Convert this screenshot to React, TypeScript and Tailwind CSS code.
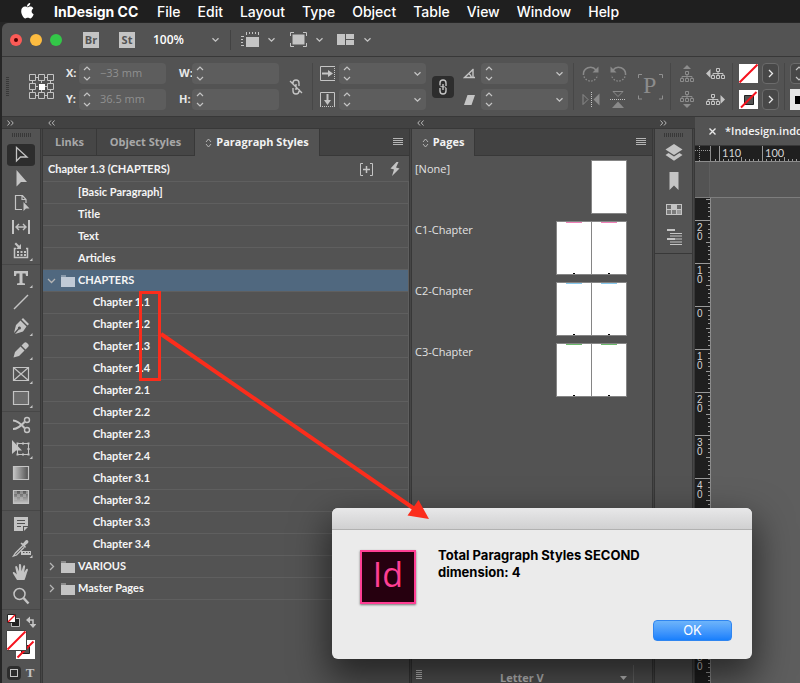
import type { ReactNode } from "react";

const ui = "font-['Open_Sans','Noto_Sans',sans-serif]";
const mac = "font-['Inter','Liberation_Sans',sans-serif]";
const list = "font-['Lato','Open_Sans',sans-serif]";

function Icon({ w = 26, h = 24, label, children }: { w?: number; h?: number; label?: string; children: ReactNode }) {
  return (
    <svg width={w} height={h} viewBox={`0 0 ${w} ${h}`} fill="none" className="shrink-0" aria-label={label} aria-hidden={label ? undefined : true}>
      {children}
    </svg>
  );
}

const C = "#c4c4c4";

/* ---------- Mac menu bar ---------- */

const menus = ["File", "Edit", "Layout", "Type", "Object", "Table", "View", "Window", "Help"];

function MenuBar() {
  return (
    <nav className={`${mac} flex h-[22px] shrink-0 items-center overflow-hidden bg-[#1f1f1f] pl-5 text-[14px] font-medium text-white`}>
      <Icon w={15} h={18}>
        <path
          fill="#fff"
          d="M10.2 1c.1 1-.3 1.900-.9 2.600-.6.700-1.500 1.200-2.400 1.100-.1-.9.300-1.900.9-2.500C8.400 1.500 9.400 1 10.200 1zM13.300 6.400c-.1.100-1.700 1-1.700 2.900 0 2.200 2 3 2 3 0 .1-.3 1.100-1 2.200-.7.900-1.300 1.900-2.300 1.900s-1.300-.6-2.500-.6-1.600.6-2.500.6-1.600-.9-2.400-2C2 13.100 1.200 11.100 1.200 9.200c0-3 1.900-4.600 3.800-4.600 1 0 1.900.7 2.500.7S9.200 4.500 10.400 4.500c.4 0 2 .1 2.900 1.900z"
        />
      </Icon>
      <button className="ml-[19px] w-[103px] text-left font-bold">InDesign CC</button>
      <div className="flex gap-[17px]">
        {menus.map((m) => (
          <button key={m}>{m}</button>
        ))}
      </div>
    </nav>
  );
}

/* ---------- Application bar ---------- */

function Chevron({ color = C }: { color?: string }) {
  return (
    <Icon w={9} h={6}>
      <path d="M1.500 1.200 4.500 4.200 7.500 1.200" stroke={color} strokeWidth="1.300" />
    </Icon>
  );
}

function AppBar() {
  return (
    <header className="flex h-[34px] shrink-0 items-center overflow-hidden rounded-tl-md border-b border-[#383838] bg-[#535353] pl-2">
      <div className="flex gap-2">
        <button aria-label="Close" className="flex size-3 items-center justify-center rounded-full bg-[#fc5b57]">
          <span className="size-1 rounded-full bg-[#4d0000]" />
        </button>
        <button aria-label="Minimize" className="size-3 rounded-full bg-[#fdbc40]" />
        <button aria-label="Zoom" className="size-3 rounded-full bg-[#33c748]" />
      </div>
      <button className={`${ui} ml-[21px] size-4 bg-[#c4c4c4] text-[11px] leading-4 font-bold text-[#535353]`}>Br</button>
      <button className={`${ui} ml-5 size-4 bg-[#c4c4c4] text-[11px] leading-4 font-bold text-[#535353]`}>St</button>
      <select aria-label="Zoom level" defaultValue="100%" className={`${ui} ml-[18px] w-[58px] appearance-none bg-transparent text-[12px] font-semibold text-white`}>
        <option>100%</option>
      </select>
      <Chevron />
      <span className="mx-[10px] h-5 w-px bg-[#424242]" />
      <button aria-label="View options" className="flex items-center gap-2">
        <Icon w={18} h={15}>
          <path d="M5 5h13v10H5z" fill={C} />
          <path d="M5.500 0v3M8.500 0v2M11.500 0v2M14.500 0v2M17.500 0v3M0 4.500h3M0 7.500h2M0 10.500h2M0 13.500h3" stroke={C} />
        </Icon>
        <Chevron />
      </button>
      <button aria-label="Screen mode" className="ml-[14px] flex items-center gap-2">
        <Icon w={17} h={15}>
          <path d="M2.500 2.500h12v10h-12z" fill={C} />
          <path d="M.5 4V.5H4M13 .5h3.500V4M.5 11v3.500H4M13 14.500h3.500V11" stroke={C} />
        </Icon>
        <Chevron />
      </button>
      <button aria-label="Arrange documents" className="ml-[13px] flex items-center gap-2">
        <Icon w={18} h={12}>
          <path d="M0 0h8v11H0zM9 0h8v5H9zM9 6h8v5H9z" fill={C} />
        </Icon>
        <Chevron />
      </button>
    </header>
  );
}

/* ---------- Control panel ---------- */

function Stepper() {
  return (
    <Icon w={8} h={17}>
      <path d="M1 5 4 2 7 5M1 12 4 15 7 12" stroke={C} strokeWidth="1.200" />
    </Icon>
  );
}

function Field({ label, name, value = "", menu = false }: { label?: string; name: string; value?: string; menu?: boolean }) {
  return (
    <label className="flex h-[21px] items-center">
      {label && <span className={`${ui} w-[13px] shrink-0 text-[11px] font-bold text-[#e8e8e8]`}>{label}</span>}
      <span className="flex h-full w-[87px] items-center rounded-sm bg-[#5d5d5d] pr-1 pl-1">
        <Stepper />
        <input aria-label={name} defaultValue={value} className={`${ui} ml-[9px] w-full min-w-0 bg-transparent text-[11px] text-[#909090] outline-none`} />
        {menu && <Chevron />}
      </span>
    </label>
  );
}

function Pair({ children, className = "" }: { children: ReactNode; className?: string }) {
  return <div className={`flex shrink-0 flex-col gap-[5px] ${className}`}>{children}</div>;
}

function Cell({ label, children }: { label: string; children: ReactNode }) {
  return (
    <button aria-label={label} className="flex h-[21px] items-center justify-center">
      {children}
    </button>
  );
}

function Rule({ className }: { className: string }) {
  return <span className={`h-[47px] w-px shrink-0 bg-[#474747] ${className}`} />;
}

function ArrowButton({ label }: { label: string }) {
  return (
    <button aria-label={label} className="flex h-[21px] w-[17px] items-center justify-center rounded-sm border border-[#6b6b6b] bg-[#484848]">
      <Icon w={6} h={9}>
        <path d="M1 1 4.500 4.500 1 8" stroke="#e8e8e8" strokeWidth="1.300" />
      </Icon>
    </button>
  );
}

function Tree() {
  return <path d="M5.500.5h3v3h-3zM.5 7.500h3v3h-3zM5.500 7.500h3v3h-3zM10.500 7.500h3v3h-3zM7 3.500v4M2 7.500v-2h10v2" stroke="currentColor" />;
}

function ControlPanel() {
  return (
    <section aria-label="Control" className="flex h-[60px] shrink-0 items-center overflow-hidden border-b border-[#383838] bg-[#535353] pl-1">
      <Icon w={3} h={20}>
        <path d="M1.500 0v20" stroke="#383838" strokeWidth="3" strokeDasharray="1 1" />
      </Icon>
      <button aria-label="Reference point" className="ml-5">
        <Icon w={26} h={26}>
          <path d="M.5.5h6v6h-6zM9.500.5h6v6h-6zM18.500.5h6v6h-6zM.5 9.500h6v6h-6zM18.500 9.500h6v6h-6zM.5 18.500h6v6h-6zM9.500 18.500h6v6h-6zM18.500 18.500h6v6h-6zM7 3.500h2M16 3.500h2M7 21.500h2M16 21.500h2M3.500 7v2M3.500 16v2M21.500 7v2M21.500 16v2M12.500 7v2M12.500 16v2M7 12.500h2M16 12.500h2" stroke={C} />
          <path d="M10 10h6v6h-6z" fill="#fff" />
        </Icon>
      </button>
      <Pair className="ml-[11px]">
        <Field label="X:" name="X position" value="−33 mm" />
        <Field label="Y:" name="Y position" value="36.5 mm" />
      </Pair>
      <Pair className="ml-[13px]">
        <Field label="W:" name="Width" />
        <Field label="H:" name="Height" />
      </Pair>
      <button aria-label="Constrain proportions" className="ml-[10px]">
        <Icon w={14} h={16}>
          <path d="M4 6V4a3 3 0 0 1 6 0v3M4 9v3a3 3 0 0 0 6 0v-2M7 5v6M1 2l12 12" stroke={C} strokeWidth="1.400" />
        </Icon>
      </button>
      <Rule className="ml-[9px]" />
      <Pair className="ml-[7px]">
        <Cell label="Scale X">
          <Icon w={15} h={15}>
            <path d="M14 .5H.5v14H14" stroke={C} />
            <path d="M14.500 0v15" stroke={C} strokeDasharray="1 1" />
            <path d="M2 6.500h6V4l5 3.500L8 11V8.500H2z" fill={C} />
          </Icon>
        </Cell>
        <Cell label="Scale Y">
          <Icon w={15} h={15}>
            <path d="M.5 14V.5h14V14" stroke={C} />
            <path d="M0 14.500h15" stroke={C} strokeDasharray="1 1" />
            <path d="M6.500 2v6H4l3.500 5L11 8H8.500V2z" fill={C} />
          </Icon>
        </Cell>
      </Pair>
      <Pair className="ml-1">
        <Field name="Scale X percentage" menu />
        <Field name="Scale Y percentage" menu />
      </Pair>
      <button aria-label="Link scale" className="ml-[6px] flex size-[22px] shrink-0 items-center justify-center rounded-sm bg-[#2d2d2d]">
        <Icon w={10} h={16}>
          <path d="M2 6V4a3 3 0 0 1 6 0v3M2 9v3a3 3 0 0 0 6 0V9M5 5v6" stroke={C} strokeWidth="1.400" />
          <path d="M2 6.500a2 1.500 0 0 0 3 1M8 9a2 1.500 0 0 0-3-1" stroke={C} />
        </Icon>
      </button>
      <Pair className="ml-[9px]">
        <Cell label="Rotation">
          <Icon w={13} h={11}>
            <path d="M10.500 1 1.500 9.500H12M5.500 5.500a6 6 0 0 1 3 4M10 1v8" stroke={C} strokeWidth="1.400" />
          </Icon>
        </Cell>
        <Cell label="Shear">
          <Icon w={13} h={10}>
            <path d="M4.500 0H12L8.500 10H1z" fill={C} />
          </Icon>
        </Cell>
      </Pair>
      <Pair className="ml-[5px]">
        <Field name="Rotation angle" menu />
        <Field name="Shear angle" menu />
      </Pair>
      <Rule className="ml-[5px]" />
      <Pair className="ml-2">
        <Cell label="Rotate clockwise">
          <Icon w={18} h={18}>
            <path d="M1.500 10a7 7 0 0 1 12.500-5" stroke="#8a8a8a" strokeWidth="1.500" />
            <path d="M16.500 1.500v6h-6z" fill="#8a8a8a" />
            <path d="M2 11.500a7 7 0 0 0 13.500-1.500" stroke="#8a8a8a" strokeWidth="1.300" strokeDasharray="1.500 1.500" />
          </Icon>
        </Cell>
        <Cell label="Flip horizontal">
          <Icon w={18} h={15}>
            <path d="M1 2.500 6 7.500 1 12.500z" stroke="#8a8a8a" />
            <path d="M9.500 0v15" stroke={C} strokeDasharray="1 1" />
            <path d="M17.500 1.500v12l-6-6z" fill="#8a8a8a" />
          </Icon>
        </Cell>
      </Pair>
      <Pair className="ml-[9px]">
        <Cell label="Rotate counterclockwise">
          <Icon w={18} h={18}>
            <path d="M16.500 10A7 7 0 0 0 4 5" stroke="#8a8a8a" strokeWidth="1.500" />
            <path d="M1.500 1.500v6h6z" fill="#8a8a8a" />
            <path d="M16 11.500A7 7 0 0 1 2.500 10" stroke="#8a8a8a" strokeWidth="1.300" strokeDasharray="1.500 1.500" />
          </Icon>
        </Cell>
        <Cell label="Flip vertical">
          <Icon w={18} h={17}>
            <path d="M4 .5h10l-5 5z" stroke="#8a8a8a" />
            <path d="M1 8.500h16" stroke={C} strokeDasharray="1 1" />
            <path d="M3 17h12l-6-6.500z" fill="#8a8a8a" />
          </Icon>
        </Cell>
      </Pair>
      <div className="ml-[11px] shrink-0">
        <Icon w={25} h={26} label="P">
          <path d="M.5 4V.5H4M21 .5h3.500V4M.5 21.500V25H4M21 25h3.500v-3.500" stroke="#909090" />
          <text x="5" y="19" fontSize="24" fontFamily="Liberation Serif, serif" fill="#8c8c8c">
            P
          </text>
        </Icon>
      </div>
      <Rule className="ml-[7px]" />
      <Pair className="ml-[9px] text-[#8c8c8c]">
        <Cell label="Select container">
          <Icon w={15} h={17}>
            <path d="M7 0l4 4H3z" fill="currentColor" />
            <g transform="translate(0 6)">
              <Tree />
            </g>
          </Icon>
        </Cell>
        <Cell label="Select content">
          <Icon w={15} h={17}>
            <Tree />
            <path d="M7 17l4-4H3z" fill="currentColor" />
          </Icon>
        </Cell>
      </Pair>
      <Pair className="ml-[11px] text-[#c4c4c4]">
        <Cell label="Select previous object">
          <Icon w={19} h={11}>
            <path d="M0 5.500 4.500 1v9z" fill="currentColor" />
            <g transform="translate(5 0)">
              <Tree />
            </g>
          </Icon>
        </Cell>
        <Cell label="Select next object">
          <Icon w={19} h={11}>
            <Tree />
            <path d="M19 5.500 14.500 1v9z" fill="currentColor" />
          </Icon>
        </Cell>
      </Pair>
      <Rule className="ml-[7px]" />
      <Pair className="ml-[6px]">
        <Cell label="Fill">
          <Icon w={19} h={19}>
            <path d="M0 0h19v19H0z" fill="#fff" />
            <path d="M.5 18.500 18.500.5" stroke="#f6121d" strokeWidth="2" />
          </Icon>
        </Cell>
        <Cell label="Stroke">
          <Icon w={19} h={19}>
            <path d="M0 0h19v19H0z" fill="#fff" />
            <path d="M5.500 5.500h9v9h-9z" fill="#535353" stroke="#222" />
            <path d="M2 17.500 17.500 2" stroke="#f6121d" strokeWidth="2" />
          </Icon>
        </Cell>
      </Pair>
      <Pair className="ml-1">
        <ArrowButton label="Fill options" />
        <ArrowButton label="Stroke options" />
      </Pair>
      <Rule className="ml-[5px]" />
      <Pair className="ml-[5px]">
        <span className="flex h-[21px] w-24 items-center rounded-sm border border-[#6b6b6b] bg-[#484848] pl-1">
          <Stepper />
        </span>
        <span className="flex h-[21px] w-24 items-center bg-[#e4e4e4] pl-[5px]">
          <span className="h-2 w-20 bg-black" />
        </span>
      </Pair>
    </section>
  );
}

/* ---------- Dock pieces ---------- */

function DockHead({ dir }: { dir?: "left" | "right" }) {
  return (
    <div className="flex h-3 shrink-0 items-center border-b border-[#383838] bg-[#424242] pl-[5px]">
      {dir && (
        <button aria-label={dir === "left" ? "Expand panels" : "Collapse panels"}>
          <Icon w={8} h={6}>
            <path d={dir === "left" ? "M3 .5 .8 3 3 5.500M6.500.5 4.300 3l2.200 2.500" : "M.5.500 2.700 3 .5 5.500M4 .5 6.200 3 4 5.500"} stroke="#b5b5b5" />
          </Icon>
        </button>
      )}
    </div>
  );
}

function Gutter() {
  return (
    <div className="flex w-[3px] shrink-0 flex-col">
      <DockHead />
      <div className="flex-1 border-x border-[#383838] bg-[#464646]" />
    </div>
  );
}

function Grip() {
  return (
    <Icon w={19} h={4}>
      <path d="M0 2h19" stroke="#383838" strokeWidth="4" strokeDasharray="1 1" />
    </Icon>
  );
}

/* ---------- Tools ---------- */

const corner = <path d="M24.500 19v3h-3z" fill={C} />;

const toolGroups: { name: string; art: ReactNode }[][] = [
  [
    { name: "Selection", art: <path d="M8.500 4.500v13.500l4-4h6.500z" stroke={C} strokeWidth="1.300" /> },
    { name: "Direct Selection", art: <path d="M8.500 3v16.500l4.500-4.500h6z" fill={C} /> },
    {
      name: "Page",
      art: (
        <>
          <path d="M14 18.500H7.500v-14h7l3.500 4V12M14 4.500v4h4" stroke={C} strokeWidth="1.200" />
          <path d="M15.500 11v9l2.500-2.500h3.500z" fill={C} />
        </>
      ),
    },
    {
      name: "Gap",
      art: (
        <>
          <path d="M5 5v14M21 5v14" stroke={C} strokeWidth="2" />
          <path d="M9 12h8M11 9l-3 3 3 3M15 9l3 3-3 3" stroke={C} strokeWidth="1.400" />
        </>
      ),
    },
    {
      name: "Content Collector",
      art: (
        <>
          <path d="M8 9.500H6.500v9h13v-9H18" stroke={C} strokeWidth="1.500" />
          <path d="M9 12h2v2H9zM12.500 12h2v2h-2zM16 12h2v2h-2zM9 15h2v2H9zM12.500 15h2v2h-2zM16 15h2v2h-2zM13 5v5H8l1.800-1.800L6.500 5 8 3.500l3.200 3.200z" fill={C} />
          {corner}
        </>
      ),
    },
  ],
  [
    {
      name: "Type",
      art: (
        <>
          <path d="M6 5h14v5h-2l-.5-2.500h-3V17l2.500.5V19H9v-1.500l2.500-.5V7.500h-3L8 10H6z" fill={C} />
          {corner}
        </>
      ),
    },
    { name: "Line", art: <path d="M6 19 20 5" stroke={C} strokeWidth="1.500" /> },
    {
      name: "Pen",
      art: (
        <>
          <path d="M15 4l6 6-1.500 1.500-6-6zM12.500 6.500l6 6-3.500 5L7 20l4-4.500a1.500 1.500 0 1 0-1-1L6 19l2-8z" fill={C} />
          {corner}
        </>
      ),
    },
    {
      name: "Pencil",
      art: (
        <>
          <path d="M5.500 19.500 7 14l5.500-5.500 4 4L11 18zM13.500 7.500l2.500-2.500c1-1 2-1 3 0l1 1c1 1 1 2 0 3l-2.500 2.500z" fill={C} />
          {corner}
        </>
      ),
    },
    {
      name: "Rectangle Frame",
      art: (
        <>
          <path d="M5.500 5.500h15v13h-15zM5.500 5.500l15 13M20.500 5.500l-15 13" stroke={C} strokeWidth="1.200" />
          {corner}
        </>
      ),
    },
    {
      name: "Rectangle",
      art: (
        <>
          <path d="M5.500 5.500h15v13h-15z" fill="#6c6c6c" stroke={C} strokeWidth="1.200" />
          {corner}
        </>
      ),
    },
  ],
  [
    {
      name: "Scissors",
      art: (
        <>
          <circle cx="19" cy="7" r="2.500" stroke={C} strokeWidth="1.400" />
          <circle cx="19" cy="17" r="2.500" stroke={C} strokeWidth="1.400" />
          <path d="M5 7.500c3 0 8 3.500 11.500 7.500M5 16c3 0 8-3 11.500-7" stroke={C} strokeWidth="2" />
        </>
      ),
    },
    {
      name: "Free Transform",
      art: (
        <>
          <path d="M9.500 6.500h11v11h-11z" stroke={C} />
          <path d="M8.500 5.500h2v2h-2zM14 5.500h2v2h-2zM19.500 5.500h2v2h-2zM19.500 11h2v2h-2zM8.500 16.500h2v2h-2zM14 16.500h2v2h-2zM19.500 16.500h2v2h-2zM4 3v14l4-3.500h6z" fill={C} />
          {corner}
        </>
      ),
    },
    {
      name: "Gradient Swatch",
      art: (
        <>
          <linearGradient id="swatch">
            <stop stopColor="#c4c4c4" />
            <stop offset="1" stopColor="#505050" />
          </linearGradient>
          <path d="M5.500 5.500h15v13h-15z" fill="url(#swatch)" stroke={C} strokeWidth="1.200" />
        </>
      ),
    },
    {
      name: "Gradient Feather",
      art: (
        <>
          <linearGradient id="feather" x2="0" y2="1">
            <stop stopColor="#c4c4c4" stopOpacity="0" />
            <stop offset="1" stopColor="#c4c4c4" />
          </linearGradient>
          <path d="M6 6h3v3H6zM12 6h3v3h-3zM9 9h3v3H9zM15 9h3v3h-3zM18 6h2v3h-2zM6 12h3v3H6zM12 12h3v3h-3z" fill="#858585" />
          <path d="M5.500 5.500h15v13h-15z" fill="url(#feather)" stroke={C} strokeWidth="1.200" />
        </>
      ),
    },
  ],
  [
    {
      name: "Note",
      art: (
        <>
          <path d="M6 5h14v9h-5v5H6zM16 15h4l-4 4z" fill={C} />
          <path d="M9 8.500h8M9 11.500h8M9 14.500h4" stroke="#535353" strokeWidth="1.200" />
        </>
      ),
    },
    {
      name: "Eyedropper",
      art: (
        <>
          <path d="M15 9.500 7.500 17l-2 3 3-1 7.500-7.500" stroke={C} strokeWidth="1.300" />
          <path d="M12.500 7.500l1-1 1.500 1 2.500-3c1.500-1.500 4 .5 2.500 2.500l-3 2.500 1 1.500-1 1zM13 15h10v4H13z" fill={C} />
          <path d="M15 16.500h1.500M18 16.500h1.500M21 16.500h1" stroke="#535353" />
          {corner}
        </>
      ),
    },
    {
      name: "Hand",
      art: (
        <path
          d="M9 20 5 13.500c-.8-1.500.8-2 1.800-1l2 2L7.300 7.500c-.3-1.700 1.500-2 2-.5l1.600 4.500V5.200c0-1.700 2-1.700 2.200 0l.4 6 1.600-5c.5-1.600 2.300-1.100 2 .5l-1 5.800 1.900-3c.8-1.300 2.400-.5 1.800 1C18.600 13 18 17 16.500 20z"
          fill={C}
        />
      ),
    },
    {
      name: "Zoom",
      art: (
        <>
          <circle cx="11.500" cy="10" r="5.500" stroke={C} strokeWidth="1.500" />
          <path d="m15.500 14 5 5.500" stroke={C} strokeWidth="2.500" />
        </>
      ),
    },
  ],
];

function Tools() {
  return (
    <aside aria-label="Tools" className="flex w-[38px] shrink-0 flex-col bg-[#535353]">
      <DockHead dir="right" />
      <div className="flex flex-col items-center">
        <div className="mt-1 mb-2 h-[2px]">
          <Grip />
        </div>
        {toolGroups.map((group, g) => (
          <div key={g} className="flex w-full flex-col items-center">
            {group.map((t) => (
              <button key={t.name} aria-label={t.name} className={`flex h-6 w-7 items-center justify-center rounded-sm ${t.name === "Selection" ? "bg-[#2d2d2d] bg-clip-content py-px" : ""}`}>
                <Icon>{t.art}</Icon>
              </button>
            ))}
            <span className="my-px h-px w-full bg-[#474747]" />
          </div>
        ))}
        <Icon w={30} h={52} label="Fill and stroke">
          <path d="M5.500 7.500h8v8h-8z" fill="#222" stroke="#bbb" />
          <path d="M1.500 3.500h8v8h-8z" fill="#fff" stroke="#222" />
          <path d="M2 11 9 4" stroke="#f6121d" strokeWidth="1.500" />
          <path d="M23 9h4v4" stroke={C} strokeWidth="1.500" />
          <path d="M20 9l4-3.500v7zM23.500 13h7L27 17z" fill={C} />
          <path d="M10 29h19v19H10z" fill="#fff" />
          <path d="M15.500 34.500h8v8h-8z" fill="#535353" stroke="#222" />
          <path d="M11.500 46.500 27.500 30.500" stroke="#f6121d" strokeWidth="2" />
          <path d="M.5 19.500h20v20H.5z" fill="#fff" stroke="#444" />
          <path d="M1.500 38.500 19.500 20.500" stroke="#f6121d" strokeWidth="2" />
        </Icon>
        <div className="mt-[3px] flex items-center gap-1">
          <button aria-label="Formatting affects container" className="flex h-[14px] w-[14px] items-center justify-center rounded-sm bg-[#2d2d2d]">
            <span className="size-2 border border-[#c4c4c4]" />
          </button>
          <button aria-label="Formatting affects text" className="w-[10px] font-['Liberation_Serif',serif] text-[13px] leading-[14px] font-bold text-[#c4c4c4]">
            T
          </button>
        </div>
      </div>
    </aside>
  );
}

/* ---------- Panels ---------- */

function Tab({ title, active = false, width }: { title: string; active?: boolean; width: string }) {
  return (
    <button
      role="tab"
      aria-selected={active}
      className={`${ui} ${width} flex shrink-0 items-center justify-center border-r border-[#383838] text-[11px] font-bold whitespace-nowrap ${
        active ? "gap-1 bg-[#535353] text-[#f2f2f2]" : "border-b bg-[#464646] pt-px text-[#a8a8a8]"
      }`}
    >
      {active && (
        <Icon w={7} h={10}>
          <path d="M1 4 3.500 1 6 4M1 6 3.500 9 6 6" stroke="#b5b5b5" />
        </Icon>
      )}
      {title}
    </button>
  );
}

function TabBar({ children }: { children: ReactNode }) {
  return (
    <div role="tablist" className="flex h-[27px] shrink-0 bg-[#424242]">
      {children}
      <div className="flex flex-1 items-center justify-end border-b border-[#383838] pr-[6px]">
        <button aria-label="Panel menu">
          <Icon w={10} h={8}>
            <path d="M0 .5h10M0 2.500h10M0 4.500h10M0 6.500h10" stroke="#b5b5b5" />
          </Icon>
        </button>
      </div>
    </div>
  );
}

type Row = { name: string; kind?: "open" | "closed" | "child" };

const rows: Row[] = [
  { name: "[Basic Paragraph]" },
  { name: "Title" },
  { name: "Text" },
  { name: "Articles" },
  { name: "CHAPTERS", kind: "open" },
  ...["1.1", "1.2", "1.3", "1.4", "2.1", "2.2", "2.3", "2.4", "3.1", "3.2", "3.3", "3.4"].map((n): Row => ({ name: `Chapter ${n}`, kind: "child" })),
  { name: "VARIOUS", kind: "closed" },
  { name: "Master Pages", kind: "closed" },
];

function StyleRow({ name, kind }: Row) {
  const folder = kind === "open" || kind === "closed";
  return (
    <li className={`h-[22px] border-t border-[#5f5f5f] ${kind === "open" ? "bg-[#50687f]" : ""}`}>
      <button className={`flex h-full w-full items-center text-left ${kind === "child" ? "pl-[50px]" : folder ? "pl-1" : "pl-[35px]"}`}>
        {folder && (
          <>
            <Icon w={9} h={9}>
              <path d={kind === "open" ? "M1 3l3.500 3.500L8 3" : "M3 1l3.500 3.500L3 8"} stroke="#b5b5b5" strokeWidth="1.300" />
            </Icon>
            <span className="mr-[3px] ml-[5px]">
              <Icon w={14} h={12}>
                <path d="M0 .5h5v1H0zM0 2h14v10H0z" fill={kind === "open" ? "#c0cad6" : C} />
              </Icon>
            </span>
          </>
        )}
        {name}
      </button>
    </li>
  );
}

function ParagraphStyles() {
  return (
    <section aria-label="Paragraph Styles" className="flex w-[366px] shrink-0 flex-col bg-[#535353]">
      <DockHead dir="left" />
      <TabBar>
        <Tab title="Links" width="w-[54px]" />
        <Tab title="Object Styles" width="w-[98px]" />
        <Tab title="Paragraph Styles" width="w-[125px]" active />
      </TabBar>
      <div className={`${list} text-[11px] font-bold text-[#f5f5f5]`}>
        <div className="flex h-[25px] items-center pt-px pr-[9px] pl-[5px]">
          <span className="flex-1">Chapter 1.3 (CHAPTERS)</span>
          <button aria-label="Clear overrides">
            <Icon w={13} h={13}>
              <path d="M3 .5H.5v12H3M10 .5h2.500v12H10" stroke={C} />
              <path d="M6.500 3v7M3 6.500h7" stroke={C} strokeWidth="1.500" />
            </Icon>
          </button>
          <button aria-label="Style override highlighter" className="ml-[17px]">
            <Icon w={10} h={14}>
              <path d="M6.500 0 .5 6.500 4 7.500 2 14l7.500-7.500L6 5.500 8.500 0z" fill={C} />
            </Icon>
          </button>
        </div>
        <ul className="border-r border-b border-[#5f5f5f]">
          {rows.map((r) => (
            <StyleRow key={r.name} {...r} />
          ))}
        </ul>
      </div>
    </section>
  );
}

function Page({ mark }: { mark?: string }) {
  return (
    <span className="flex h-[52px] w-[34px] flex-col items-center justify-between bg-white">
      <span className={`h-px w-4 ${mark ?? ""}`} />
      {mark && <span className="h-px w-[2px] bg-black" />}
    </span>
  );
}

const masters = [
  { name: "[None]", mark: undefined },
  { name: "C1-Chapter", mark: "bg-[#f07fb8]" },
  { name: "C2-Chapter", mark: "bg-[#86c9ee]" },
  { name: "C3-Chapter", mark: "bg-[#6cbb6c]" },
];

function Pages() {
  return (
    <section aria-label="Pages" className="flex w-[240px] shrink-0 flex-col bg-[#535353]">
      <DockHead dir="left" />
      <TabBar>
        <Tab title="Pages" width="w-[63px]" active />
      </TabBar>
      <ul className={`${ui} flex flex-1 flex-col gap-[7px] pt-1 pr-[25px] pl-[3px] text-[11px] text-[#e2e2e2]`}>
        {masters.map((m) => (
          <li key={m.name} className="flex items-start justify-between">
            <span className="leading-[18px]">{m.name}</span>
            <span className="flex gap-px border border-[#858585] bg-[#858585]">
              {m.mark && <Page mark={m.mark} />}
              <Page mark={m.mark} />
            </span>
          </li>
        ))}
      </ul>
      <footer className="flex h-[18px] shrink-0 items-center pl-1">
        <Icon w={6} h={10}>
          <path d="M0 1.500h6M0 3.500h6M0 5.500h6M0 7.500h6M0 9.500h6" stroke={C} />
        </Icon>
        <button className={`${ui} flex flex-1 items-center pt-2 pl-[78px] text-[11px] leading-[10px] font-bold text-[#c4c4c4]`}>
          <span className="flex-1 text-left">Letter V</span>
          <Icon w={7} h={4}>
            <path d="M0 0h7L3.500 4z" fill={C} />
          </Icon>
        </button>
        <span className="mr-[18px] ml-[6px] h-full w-px bg-[#6a6a6a]" />
      </footer>
    </section>
  );
}

function IconDock() {
  return (
    <aside aria-label="Collapsed panels" className="flex w-[37px] shrink-0 flex-col bg-[#535353]">
      <DockHead dir="right" />
      <div className="flex h-[125px] flex-col items-center border-b border-[#383838] pt-1">
        <div className="h-[6px]">
          <Grip />
        </div>
        <button aria-label="Layers" className="h-7">
          <Icon w={18} h={20}>
            <path d="M9 1l8.500 5.500L9 12 .5 6.500z" fill={C} />
            <path d="M.5 12 3.500 10 9 13.500 14.500 10l3 2L9 17.800z" fill={C} />
          </Icon>
        </button>
        <button aria-label="Bookmarks" className="h-7">
          <Icon w={10} h={20}>
            <path d="M.5 1h9v18L5 14.500.5 19z" fill={C} />
          </Icon>
        </button>
        <button aria-label="Swatches" className="h-7">
          <Icon w={16} h={11}>
            <path d="M0 0h16v11H0z" fill={C} />
            <path d="M1 1h4v4H1zM11 1h4v4h-4z" fill="#6a6a6a" />
            <path d="M1 6h4v4H1zM6 6h4v4H6z" fill="#7a7a7a" />
            <path d="M11 6h4v4h-4z" fill="#9a9a9a" />
          </Icon>
        </button>
        <button aria-label="Paragraph Styles" className="h-7">
          <Icon w={16} h={16}>
            <path d="M1 1h8M1 10h8" stroke={C} strokeWidth="2" />
            <path d="M4 4.500h12M4 7h12M9 10h7M4 13h12M4 15.500h12" stroke={C} strokeWidth="1.200" />
          </Icon>
        </button>
      </div>
    </aside>
  );
}

/* ---------- Document window ---------- */

const MM = 4.3;

function HorizontalRuler() {
  return (
    <svg width="100%" height="16" className="block" aria-label="Horizontal ruler">
      {Array.from({ length: 300 }, (_, i) => {
        const mm = i - 2;
        const x = Math.round(8 + mm * MM) + 0.5;
        const h = mm % 10 === 0 ? 16 : mm % 5 === 0 ? 4 : 2;
        return <path key={i} d={`M${x} ${15 - h}V15`} stroke="#9a9a9a" />;
      })}
      {[110, 100].map((n, i) => (
        <text key={n} x={11 + i * 43} y="11" fontSize="11" fontFamily="Lato, sans-serif" fill="#d5d5d5">
          {n}
        </text>
      ))}
    </svg>
  );
}

function VerticalRuler() {
  const labels = [20, 10, 0, 10, 20, 30, 40, 50, 60, 70, 80];
  return (
    <svg width="15" height="100%" className="block" aria-label="Vertical ruler">
      {Array.from({ length: 150 }, (_, i) => {
        const mm = i - 5;
        const y = Math.round(22 + mm * MM) + 0.5;
        const w = mm % 10 === 0 ? 15 : mm % 5 === 0 ? 4 : 2;
        return <path key={i} d={`M${15 - w} ${y}H15`} stroke="#9a9a9a" />;
      })}
      {labels.map((n, i) =>
        String(n)
          .split("")
          .map((d, k) => (
            <text key={`${i}-${k}`} x="2" y={33 + i * 43 + k * 9} fontSize="10" fontFamily="Liberation Sans, sans-serif" fill="#d5d5d5">
              {d}
            </text>
          )),
      )}
    </svg>
  );
}

function DocumentWindow() {
  return (
    <main className="flex min-w-0 flex-1 flex-col overflow-hidden bg-[#535353]">
      <div className={`${ui} flex h-[29px] shrink-0 items-center border-b border-[#383838] pl-[14px] text-[11px] font-semibold whitespace-nowrap text-[#f2f2f2]`}>
        <button aria-label="Close document">
          <Icon w={7} h={7}>
            <path d="M.5.500l6 6M6.500.5l-6 6" stroke="#e8e8e8" strokeWidth="1.400" />
          </Icon>
        </button>
        <span className="ml-[9px]">*Indesign.indd</span>
      </div>
      <div className="flex h-4 shrink-0 border-b border-[#8c8c8c] bg-[#1f1f1f]">
        <Icon w={15} h={15}>
          <path d="M4.500 0v15M0 4.500h15" stroke="#9a9a9a" strokeDasharray="1 1" />
        </Icon>
        <span className="w-px bg-[#8c8c8c]" />
        <div className="min-w-0 flex-1">
          <HorizontalRuler />
        </div>
      </div>
      <div className="flex h-9 shrink-0 border-b border-[#7d7d7d] bg-[#575757]">
        <div className="w-[15px] border-r border-[#5e5e5e] bg-[#535353]" />
      </div>
      <div className="flex min-h-0 flex-1">
        <div className="w-4 shrink-0 overflow-hidden border-r border-[#8c8c8c] bg-[#1f1f1f]">
          <VerticalRuler />
        </div>
        <div className="flex-1 bg-[#5e5e5e]" />
      </div>
    </main>
  );
}

/* ---------- Floating items ---------- */

function Callout() {
  return (
    <svg width="300" height="240" viewBox="0 0 300 240" fill="none" className="pointer-events-none absolute top-[285px] left-[135px] z-20" aria-hidden>
      <path d="M5.500 7.500h19v87h-19z" stroke="#fb2d1c" strokeWidth="3" />
      <path d="M26 49 281 225" stroke="#fb2d1c" strokeWidth="4" />
      <path d="M294 234 272.500 230.500 283.500 215z" fill="#fb2d1c" />
    </svg>
  );
}

function Dialog() {
  return (
    <div
      role="alertdialog"
      aria-labelledby="dialog-message"
      className={`${mac} absolute top-[508px] left-[332px] z-10 w-[420px] overflow-hidden rounded-md bg-[#ebebeb] shadow-[0_16px_36px_4px_rgba(0,0,0,0.55)]`}
    >
      <div className="h-[22px] border-b border-[#b1b1b1] bg-linear-to-b from-[#e8e8e9] to-[#d0d0d1]" />
      <div className="flex items-start px-7 pt-[17px]">
        <div className="mt-[3px] flex h-[54px] w-14 shrink-0 justify-center border-2 border-[#ff3f94] bg-[#26000f] font-['Open_Sans',sans-serif] text-[34px] leading-[44px] font-medium text-[#ff3f94] shadow-[0_1px_2px_rgba(0,0,0,0.5)]">
          Id
        </div>
        <p id="dialog-message" className="ml-[22px] w-[220px] text-[13px] leading-[17px] font-bold text-black">
          Total Paragraph Styles SECOND dimension: 4
        </p>
      </div>
      <div className="flex justify-end px-5 pt-4 pb-[18px]">
        <button className="h-[21px] w-[79px] rounded border border-[#2f85f0] bg-linear-to-b from-[#6db4fa] to-[#167ffc] text-[13px] leading-[19px] text-white">OK</button>
      </div>
    </div>
  );
}

export default function App() {
  return (
    <div className="relative flex h-screen flex-col overflow-hidden bg-[#262626]">
      <MenuBar />
      <div className="mt-px flex min-h-0 flex-1 flex-col pl-[2px]">
        <AppBar />
        <ControlPanel />
        <div className="flex min-h-0 flex-1 overflow-hidden">
          <Tools />
          <Gutter />
          <ParagraphStyles />
          <Gutter />
          <Pages />
          <Gutter />
          <IconDock />
          <Gutter />
          <DocumentWindow />
        </div>
      </div>
      <Callout />
      <Dialog />
    </div>
  );
}
